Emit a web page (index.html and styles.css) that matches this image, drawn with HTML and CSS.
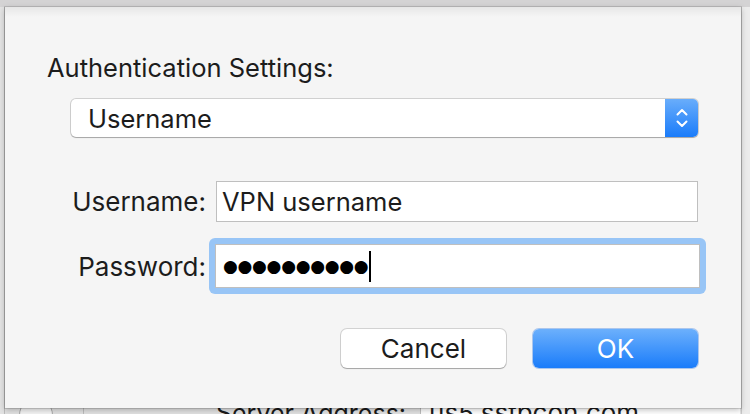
FILE: index.html
```html
<!DOCTYPE html>
<html>
<head>
<meta charset="utf-8">
<link rel="stylesheet" href="styles.css">
</head>
<body>
<div class="window">
  <div class="toolbar"></div>
  <div class="content">
    <div class="left-col"></div>
    <div class="main">
      <div class="server-row">
        <div class="round-btn"></div>
        <div class="divider"></div>
        <span class="server-label">Server Address:</span>
        <span class="server-field">us5.sstpcon.com</span>
      </div>
    </div>
    <div class="right-col"></div>
  </div>
</div>

<div class="sheet">
  <div class="title">Authentication Settings:</div>
  <div class="popup">
    <span class="popup-text">Username</span>
    <span class="stepper">
      <svg width="14" height="22" viewBox="0 0 14 22">
        <path d="M2.5 7.5 L7 3 L11.5 7.5" fill="none" stroke="#fff" stroke-width="2" stroke-linecap="round" stroke-linejoin="round"/>
        <path d="M2.5 14.5 L7 19 L11.5 14.5" fill="none" stroke="#fff" stroke-width="2" stroke-linecap="round" stroke-linejoin="round"/>
      </svg>
    </span>
  </div>
  <div class="form">
    <div class="row">
      <span class="label">Username:</span>
      <div class="field">VPN username</div>
    </div>
    <div class="row">
      <span class="label">Password:</span>
      <div class="focus">
        <div class="field pw"><span class="dots">●●●●●●●●●●</span><span class="caret"></span></div>
      </div>
    </div>
  </div>
  <div class="buttons">
    <div class="btn cancel">Cancel</div>
    <div class="btn ok">OK</div>
  </div>
</div>
</body>
</html>
```
FILE: styles.css
```css
* { box-sizing: border-box; }
html, body {
  margin: 0;
  padding: 0;
  width: 750px;
  height: 414px;
  overflow: hidden;
}
body {
  background: #ececec;
  font-family: Inter, Roboto, "Liberation Sans", sans-serif;
  color: #1c1c1c;
  position: relative;
}
.window {
  display: flex;
  flex-direction: column;
  height: 414px;
  overflow: hidden;
}
.toolbar {
  height: 7px;
  background: #d4d3d4;
  flex: none;
}
.content {
  flex: 1;
  display: flex;
  overflow: hidden;
}
.left-col {
  width: 5px;
  background: #e3e3e3;
  border-right: 1px solid #bdbdbd;
}
.main {
  flex: 1;
  display: flex;
  flex-direction: column;
  justify-content: flex-end;
  background: #ececec;
  overflow: hidden;
}
.right-col {
  width: 9px;
  background: #ececec;
  border-left: 1px solid #c9c9c9;
}
.server-row {
  display: flex;
  align-items: flex-start;
  height: 20px;
  background: #e2e2e2;
}
.round-btn {
  width: 34px;
  height: 34px;
  border: 1px solid #a8a8a8;
  border-radius: 50%;
  margin: 4px 0 0 14px;
  background: #f4f4f4;
}
.divider {
  width: 1px;
  height: 20px;
  background: #bdbdbd;
  margin-left: 30px;
}
.server-label {
  margin-left: 132px;
  font-size: 25px;
  line-height: 30px;
  padding-top: 4px;
  color: #1a1a1a;
  white-space: nowrap;
}
.server-field {
  margin-left: 14px;
  border-left: 1px solid #bdbdbd;
  padding-left: 8px;
  font-size: 26px;
  line-height: 30px;
  padding-top: 4px;
  background: #fff;
  width: 320px;
  height: 40px;
  white-space: nowrap;
}

.sheet {
  position: absolute;
  left: 5px;
  top: 7px;
  width: 736px;
  height: 401px;
  background: #f5f5f5;
  box-shadow: 0 2px 6px rgba(0,0,0,0.25), 0 0 0 1px rgba(0,0,0,0.12);
  padding: 46px 0 0 42px;
  display: flex;
  flex-direction: column;
}
.sheet::before {
  content: "";
  position: absolute;
  left: 0; right: 0; top: 0;
  height: 10px;
  background: linear-gradient(rgba(0,0,0,0.06), rgba(0,0,0,0));
}
.title {
  font-size: 25.5px;
  line-height: 30px;
  color: #1c1c1c;
}
.popup {
  margin: 16px 0 0 24px;
  width: 627px;
  height: 38px;
  background: #fff;
  border-radius: 5px;
  box-shadow: 0 0 0 1px rgba(0,0,0,0.15), 0 1px 1px rgba(0,0,0,0.2);
  display: flex;
  align-items: center;
  overflow: hidden;
}
.popup-text {
  flex: 1;
  padding-left: 17px;
  font-size: 25.5px;
  color: #1c1c1c;
}
.stepper {
  width: 33px;
  height: 38px;
  background: linear-gradient(#69adfb, #1a7cfa);
  display: flex;
  align-items: center;
  justify-content: center;
}
.form {
  margin-top: 44px;
  display: flex;
  flex-direction: column;
  gap: 16px;
}
.row {
  display: flex;
  align-items: center;
}
.label {
  width: 161px;
  text-align: right;
  padding-right: 2px;
  font-size: 26px;
  color: #1c1c1c;
  white-space: nowrap;
}
.field {
  margin-left: 8px;
  width: 482px;
  height: 41px;
  background: #fff;
  border: 1px solid #bfbfbf;
  font-size: 25.5px;
  display: flex;
  align-items: center;
  padding-left: 5px;
  color: #1c1c1c;
}
.focus {
  margin-left: 1px;
  padding: 6px;
  border-radius: 6px;
  background: #98c5f6;
}
.focus .field {
  margin-left: 0;
  height: 44px;
  width: 485px;
  padding-left: 7px;
}
.dots {
  font-family: "DejaVu Sans", sans-serif;
  font-size: 17px;
  letter-spacing: -0.3px;
  color: #000;
}
.caret {
  width: 2px;
  height: 31px;
  background: #000;
  margin-left: 1px;
}
.buttons {
  margin-top: 35px;
  display: flex;
  padding-left: 294px;
  gap: 27px;
}
.btn {
  width: 165px;
  height: 39px;
  border-radius: 6px;
  font-size: 26px;
  display: flex;
  align-items: center;
  justify-content: center;
}
.cancel {
  background: #fff;
  box-shadow: 0 0 0 1px rgba(0,0,0,0.14), 0 1px 1px rgba(0,0,0,0.22);
  color: #1c1c1c;
}
.ok {
  background: linear-gradient(#6cb0fc, #1a7cfa);
  color: #fff;
  box-shadow: 0 0 0 1px rgba(0,90,220,0.3);
}
```
